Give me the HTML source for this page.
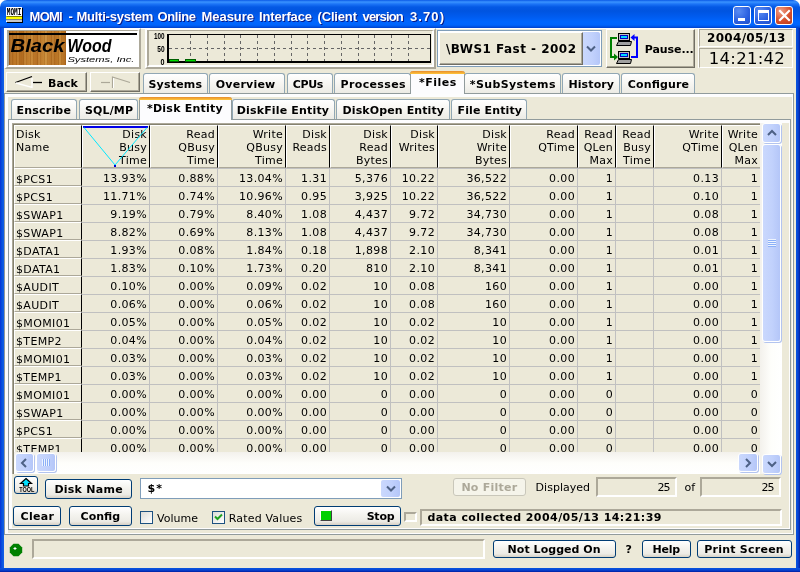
<!DOCTYPE html>
<html><head><meta charset="utf-8"><title>MOMI - Multi-system Online Measure Interface (Client version 3.70)</title>
<style>
*{box-sizing:border-box;margin:0;padding:0}
html,body{width:800px;height:572px;overflow:hidden;background:#ECE9D8}
body{position:relative;font-family:"DejaVu Sans","Liberation Sans",sans-serif;font-size:11px;color:#000}
.a{position:absolute}
/* window frame */
#tb{left:0;top:0;width:800px;height:28px;border-radius:7px 7px 0 0;
 background:linear-gradient(#0a59e6 0,#3a93ff 2px,#1c74f7 4px,#0459e5 7px,#0054e0 11px,#005cf0 17px,#0066ff 22px,#0064fc 25px,#0050e0 27px,#003dc8 28px)}
#bl{left:0;top:28px;width:4px;height:544px;background:linear-gradient(90deg,#0831d9,#0855dd 50%,#1660e8)}
#br{left:796px;top:28px;width:4px;height:544px;background:linear-gradient(90deg,#0855dd,#0845d5 50%,#001ea0)}
#bb{left:0;top:568px;width:800px;height:4px;background:linear-gradient(#0855dd,#0845d5 50%,#001ea0)}
.wb{top:6px;width:18px;height:19px;border:1px solid #fff;border-radius:3px;background:radial-gradient(circle at 30% 25%,#5a8cf2,#2a5fe0 60%,#2050c8)}
/* 3d */
.raised{border:1px solid;border-color:#fff #aca899 #aca899 #fff}
.sunken{border:1px solid;border-color:#aca899 #fff #fff #aca899}
.btn3d{border:1px solid;border-color:#fff #716f64 #716f64 #fff;box-shadow:inset -1px -1px 0 #aca899;background:#ECE9D8}
.xpb{border:1px solid #003c74;border-radius:3px;background:linear-gradient(#fff,#f4f3ee 45%,#ecebe5 80%,#d6d0c5)}
.tab{border:1px solid #91a7b4;border-bottom:none;border-radius:3px 3px 0 0;background:linear-gradient(#fff,#f7f6f2 50%,#ecebe5)}
.tabsel{border:1px solid #919b9c;border-bottom:none;border-top:none;border-radius:3px 3px 0 0;background:#fcfcfe}
.tabsel:before{content:"";position:absolute;left:-1px;right:-1px;top:0;height:3px;background:linear-gradient(#e68b2c,#ffc73c);border-radius:3px 3px 0 0}
.pane{border:1px solid #919b9c;background:#ECE9D8;box-shadow:inset 3px 3px 0 #fdfdfe,inset -1px -1px 0 #fdfdfe}
.fld{border:2px solid;border-color:#aca899 #fff #fff #aca899}
/* grid */
#grid{position:absolute;left:13px;top:124px;width:747px;height:328px;overflow:hidden;background:#ECE9D8;border-top:1px solid #85826f;border-left:1px solid #85826f}
#grid{will-change:transform}
#grid div{position:absolute;white-space:nowrap;line-height:13px}
.fc,.dc{letter-spacing:.35px}
.hc{top:0;height:43px;letter-spacing:.25px;text-align:right;padding:2px 2px 0 0;border-right:1px solid #000;border-bottom:1px solid #aca899;border-top:1px solid #fff;border-left:1px solid #fff}
.hc.l{text-align:left;padding-left:1px}
.fc{height:18px;border:1px solid;border-color:#fff #000 #aca899 #fff;padding:4px 0 0 1px}
.dc{height:18px;border-right:1px solid #c0c0c0;border-bottom:1px solid #c0c0c0;text-align:right;padding:3px 2px 0 0}
.sb{background:linear-gradient(90deg,#cad8fd,#c1d1fc 55%,#b4c6f8);border:1px solid #fff;border-radius:3px;box-shadow:1px 1px 0 #b3c4ef}
</style></head><body>
<!-- window frame -->
<div class="a" style="left:0;top:0;width:800px;height:8px;background:#fff"></div><div class="a" id="tb"></div><div class="a" id="bl"></div><div class="a" id="br"></div><div class="a" id="bb"></div>
<!-- app icon -->
<svg class="a" style="left:6px;top:7px;will-change:transform" width="17" height="16" viewBox="0 0 17 16"><rect x="1" y="1" width="16" height="15" fill="#000"/><rect x="0" y="0" width="16" height="9" fill="#fff"/><path d="M0 10L1 9L2 10L3 9L4 10L5 9L6 10L7 9L8 10L9 9L10 10L11 9L12 10L13 9L14 10L15 9L16 10V12H0Z" fill="#ff0"/><rect x="0" y="12" width="16" height="1" fill="#808080"/><rect x="0" y="13" width="16" height="2" fill="#c8c8c8"/><rect x="0" y="14" width="1" height="1" fill="#fff"/>
<text x="0.800" y="7.800" font-family="DejaVu Sans Mono,Liberation Mono,monospace" font-weight="bold" font-size="8" textLength="14.500" lengthAdjust="spacingAndGlyphs" fill="#000">MOMI</text></svg>
<div class="a wb" style="left:733px"><div class="a" style="left:4px;top:11px;width:7px;height:3px;background:#fff"></div></div>
<div class="a wb" style="left:754px"><div class="a" style="left:3px;top:3px;width:11px;height:11px;border:1px solid #fff;border-top-width:3px"></div></div>
<div class="a wb" style="left:775px;background:radial-gradient(circle at 30% 25%,#f0a088,#d6502c 55%,#b83a1c)"><svg class="a" style="left:2px;top:2px" width="13" height="13" viewBox="0 0 13 13"><path d="M2 2L11 11M11 2L2 11" stroke="#fff" stroke-width="2.200" stroke-linecap="square"/></svg></div>

<!-- row 2 -->
<div class="a" style="left:4px;top:28px;width:792px;height:1px;background:#fff"></div>
<div class="a" style="left:4px;top:28px;width:137px;height:41px;border:solid;border-width:2px 2px 2px 3px;border-color:#fff #aca899 #aca899 #fff"></div>
<div class="a" id="logo" style="left:7px;top:30px;width:132px;height:37px;background:#fff;overflow:hidden;border:solid;border-width:1px 2px 2px 2px;border-color:#aca899 #fff #fff #aca899">
 <div class="a" style="left:0;top:0;width:57px;height:34px;background:repeating-linear-gradient(90deg,rgba(120,60,0,.18) 0 1px,rgba(255,220,140,.12) 1px 3px,rgba(120,60,0,.10) 3px 4px,rgba(255,220,150,.0) 4px 7px),linear-gradient(90deg,#a25c18,#bd7828 10%,#b06a1e 22%,#c48230 36%,#b67024 50%,#c88a38 63%,#b46e22 78%,#c07e2c 90%,#b26c20)"></div>
 <div class="a" style="left:0;top:2px;width:128px;height:2px;background:#000"></div>
</div>
<!-- chart -->
<div class="a" style="left:145px;top:28px;width:291px;height:41px;border:2px solid;border-color:#fff #aca899 #aca899 #fff"></div><div class="a" style="left:147px;top:30px;width:287px;height:37px;border:solid;border-width:1px 2px 2px 2px;border-color:#aca899 #fff #fff #aca899"></div>
<svg class="a" style="left:147px;top:30px" width="286" height="37" viewBox="147 30 286 37">
 <g stroke="#666" stroke-width="1" stroke-dasharray="3 3" fill="none">
  <path d="M169 48.500H430"/>
  <path d="M190.5 35V61M207.5 35V61M224.5 35V61M240.5 35V61M257.5 35V61M274.5 35V61M291.5 35V61M307.5 35V61M324.5 35V61M341.5 35V61M358.5 35V61M374.5 35V61M391.5 35V61M408.5 35V61"/>
 </g>
 <path d="M168 34V63M167 62H431" stroke="#000" stroke-width="2" fill="none"/><path d="M167 34.500H431M430.500 34V63" stroke="#000" stroke-width="1" fill="none"/>
 <rect x="169.500" y="59.500" width="9" height="2" fill="#00e000" stroke="#006000" stroke-width="1"/>
 <rect x="185.500" y="59.500" width="10" height="2" fill="#00e000" stroke="#006000" stroke-width="1"/>
</svg>
<!-- system combo -->
<div class="a" style="left:437px;top:30px;width:165px;height:37px;border:1px solid #7f9db9;background:#fff"></div>
<div class="a btn3d" style="left:439px;top:32px;width:144px;height:33px"></div>
<div class="a sb" style="left:583px;top:31px;width:18px;height:35px;border-left:none;border-radius:0 3px 3px 0;box-shadow:none"></div>
<svg class="a" style="left:585.500px;top:45px" width="10" height="8" viewBox="0 0 10 8"><path d="M1 1.500L5 5.500L9 1.500" stroke="#4d6185" stroke-width="2" fill="none"/></svg>
<!-- pause button -->
<div class="a btn3d" style="left:606px;top:29px;width:89px;height:39px"></div>
<svg class="a" style="left:608px;top:31px" width="34" height="35" viewBox="608 31 34 35">
 <path d="M617 38H611V57H615" stroke="#008000" stroke-width="2" fill="none"/><path d="M614 53.500L618 57L614 60.500Z" fill="#008000"/>
 <path d="M631 57H637V37.500H634" stroke="#0000ff" stroke-width="2" fill="none"/><path d="M634.500 34L630.500 37.500L634.500 41Z" fill="#0000ff"/>
 <g><rect x="618.500" y="33.500" width="11" height="7" fill="#c0c0c0" stroke="#000"/><rect x="620.500" y="35.500" width="7" height="3" fill="#00d8ff" stroke="#0000c0" stroke-width="1"/><path d="M618.500 41.500H631.500L630.500 45.500H616.500Z" fill="#a0a0a0" stroke="#000"/></g>
 <g><rect x="618.500" y="51.500" width="11" height="7" fill="#c0c0c0" stroke="#000"/><rect x="620.500" y="53.500" width="7" height="3" fill="#00d8ff" stroke="#0000c0" stroke-width="1"/><path d="M618.500 59.500H631.500L630.500 63.500H616.500Z" fill="#a0a0a0" stroke="#000"/></g>
</svg>
<!-- date/time -->
<div class="a" style="left:698px;top:29px;width:1px;height:39px;background:#fff"></div><div class="a sunken" style="left:699px;top:29px;width:94px;height:18px"></div>
<div class="a sunken" style="left:699px;top:48px;width:94px;height:20px"></div>

<!-- row 3 : back / fwd -->
<div class="a btn3d" style="left:6px;top:72px;width:81px;height:20px"></div>
<svg class="a" style="left:14px;top:74px" width="30" height="16" viewBox="0 0 30 16"><path d="M1.500 8.500L18 2.500" stroke="#000" stroke-width="1.300" fill="none"/><path d="M2 9L18 13.500V4" stroke="#fff" stroke-width="1.300" fill="none"/><path d="M19 8.500H28" stroke="#000" stroke-width="1.300"/></svg>
<div class="a btn3d" style="left:90px;top:72px;width:50px;height:20px"></div>
<svg class="a" style="left:100px;top:74px" width="32" height="16" viewBox="0 0 32 16"><path d="M1 8.500H10" stroke="#aca899" stroke-width="1.200"/><path d="M12.500 14V3L30 8.500" stroke="#aca899" stroke-width="1.200" fill="none"/><path d="M13.500 14V4" stroke="#fff" stroke-width="1"/></svg>

<!-- outer tab panel -->
<div class="a pane" style="left:4px;top:93px;width:790px;height:442px"></div>
<div class="a tab" style="left:143px;top:73px;width:65px;height:20px"></div>
<div class="a tab" style="left:209px;top:73px;width:76px;height:20px"></div>
<div class="a tab" style="left:287px;top:73px;width:46px;height:20px"></div>
<div class="a tab" style="left:334px;top:73px;width:77px;height:20px"></div>
<div class="a tab" style="left:464px;top:73px;width:97px;height:20px"></div>
<div class="a tab" style="left:562px;top:73px;width:58px;height:20px"></div>
<div class="a tab" style="left:621px;top:73px;width:74px;height:20px"></div>
<div class="a tabsel" style="left:410px;top:71px;width:55px;height:23px"></div>

<!-- inner tab panel -->
<div class="a pane" style="left:8px;top:119px;width:783px;height:411px"></div>
<div class="a tab" style="left:11px;top:99px;width:66px;height:20px"></div>
<div class="a tab" style="left:79px;top:99px;width:59px;height:20px"></div>
<div class="a tab" style="left:232px;top:99px;width:103px;height:20px"></div>
<div class="a tab" style="left:336px;top:99px;width:114px;height:20px"></div>
<div class="a tab" style="left:451px;top:99px;width:76px;height:20px"></div>
<div class="a tabsel" style="left:139px;top:97px;width:93px;height:23px"></div>

<div class="a" style="left:12px;top:123px;width:748px;height:351px;border-top:1px solid #aca899;border-left:1px solid #aca899"></div>
<div id="grid">
<div class="hc l" style="left:0px;width:68px">Disk<br>Name</div>
<div class="hc" style="left:68px;width:68px">Disk<br>Busy<br>Time</div>
<div class="hc" style="left:136px;width:68px">Read<br>QBusy<br>Time</div>
<div class="hc" style="left:204px;width:68px">Write<br>QBusy<br>Time</div>
<div class="hc" style="left:272px;width:44px">Disk<br>Reads</div>
<div class="hc" style="left:316px;width:61px">Disk<br>Read<br>Bytes</div>
<div class="hc" style="left:377px;width:47px">Disk<br>Writes</div>
<div class="hc" style="left:424px;width:72px">Disk<br>Write<br>Bytes</div>
<div class="hc" style="left:496px;width:68px">Read<br>QTime</div>
<div class="hc" style="left:564px;width:38px">Read<br>QLen<br>Max</div>
<div class="hc" style="left:602px;width:38px">Read<br>Busy<br>Time</div>
<div class="hc" style="left:640px;width:68px">Write<br>QTime</div>
<div class="hc" style="left:708px;width:39px">Write<br>QLen<br>Max</div>
<div class="fc" style="left:0px;top:43px;width:68px">$PCS1</div>
<div class="dc" style="left:68px;top:44px;width:68px">13.93%</div>
<div class="dc" style="left:136px;top:44px;width:68px">0.88%</div>
<div class="dc" style="left:204px;top:44px;width:68px">13.04%</div>
<div class="dc" style="left:272px;top:44px;width:44px">1.31</div>
<div class="dc" style="left:316px;top:44px;width:61px">5,376</div>
<div class="dc" style="left:377px;top:44px;width:47px">10.22</div>
<div class="dc" style="left:424px;top:44px;width:72px">36,522</div>
<div class="dc" style="left:496px;top:44px;width:68px">0.00</div>
<div class="dc" style="left:564px;top:44px;width:38px">1</div>
<div class="dc" style="left:602px;top:44px;width:38px"></div>
<div class="dc" style="left:640px;top:44px;width:68px">0.13</div>
<div class="dc" style="left:708px;top:44px;width:39px">1</div>
<div class="fc" style="left:0px;top:61px;width:68px">$PCS1</div>
<div class="dc" style="left:68px;top:62px;width:68px">11.71%</div>
<div class="dc" style="left:136px;top:62px;width:68px">0.74%</div>
<div class="dc" style="left:204px;top:62px;width:68px">10.96%</div>
<div class="dc" style="left:272px;top:62px;width:44px">0.95</div>
<div class="dc" style="left:316px;top:62px;width:61px">3,925</div>
<div class="dc" style="left:377px;top:62px;width:47px">10.22</div>
<div class="dc" style="left:424px;top:62px;width:72px">36,522</div>
<div class="dc" style="left:496px;top:62px;width:68px">0.00</div>
<div class="dc" style="left:564px;top:62px;width:38px">1</div>
<div class="dc" style="left:602px;top:62px;width:38px"></div>
<div class="dc" style="left:640px;top:62px;width:68px">0.10</div>
<div class="dc" style="left:708px;top:62px;width:39px">1</div>
<div class="fc" style="left:0px;top:79px;width:68px">$SWAP1</div>
<div class="dc" style="left:68px;top:80px;width:68px">9.19%</div>
<div class="dc" style="left:136px;top:80px;width:68px">0.79%</div>
<div class="dc" style="left:204px;top:80px;width:68px">8.40%</div>
<div class="dc" style="left:272px;top:80px;width:44px">1.08</div>
<div class="dc" style="left:316px;top:80px;width:61px">4,437</div>
<div class="dc" style="left:377px;top:80px;width:47px">9.72</div>
<div class="dc" style="left:424px;top:80px;width:72px">34,730</div>
<div class="dc" style="left:496px;top:80px;width:68px">0.00</div>
<div class="dc" style="left:564px;top:80px;width:38px">1</div>
<div class="dc" style="left:602px;top:80px;width:38px"></div>
<div class="dc" style="left:640px;top:80px;width:68px">0.08</div>
<div class="dc" style="left:708px;top:80px;width:39px">1</div>
<div class="fc" style="left:0px;top:97px;width:68px">$SWAP1</div>
<div class="dc" style="left:68px;top:98px;width:68px">8.82%</div>
<div class="dc" style="left:136px;top:98px;width:68px">0.69%</div>
<div class="dc" style="left:204px;top:98px;width:68px">8.13%</div>
<div class="dc" style="left:272px;top:98px;width:44px">1.08</div>
<div class="dc" style="left:316px;top:98px;width:61px">4,437</div>
<div class="dc" style="left:377px;top:98px;width:47px">9.72</div>
<div class="dc" style="left:424px;top:98px;width:72px">34,730</div>
<div class="dc" style="left:496px;top:98px;width:68px">0.00</div>
<div class="dc" style="left:564px;top:98px;width:38px">1</div>
<div class="dc" style="left:602px;top:98px;width:38px"></div>
<div class="dc" style="left:640px;top:98px;width:68px">0.08</div>
<div class="dc" style="left:708px;top:98px;width:39px">1</div>
<div class="fc" style="left:0px;top:115px;width:68px">$DATA1</div>
<div class="dc" style="left:68px;top:116px;width:68px">1.93%</div>
<div class="dc" style="left:136px;top:116px;width:68px">0.08%</div>
<div class="dc" style="left:204px;top:116px;width:68px">1.84%</div>
<div class="dc" style="left:272px;top:116px;width:44px">0.18</div>
<div class="dc" style="left:316px;top:116px;width:61px">1,898</div>
<div class="dc" style="left:377px;top:116px;width:47px">2.10</div>
<div class="dc" style="left:424px;top:116px;width:72px">8,341</div>
<div class="dc" style="left:496px;top:116px;width:68px">0.00</div>
<div class="dc" style="left:564px;top:116px;width:38px">1</div>
<div class="dc" style="left:602px;top:116px;width:38px"></div>
<div class="dc" style="left:640px;top:116px;width:68px">0.01</div>
<div class="dc" style="left:708px;top:116px;width:39px">1</div>
<div class="fc" style="left:0px;top:133px;width:68px">$DATA1</div>
<div class="dc" style="left:68px;top:134px;width:68px">1.83%</div>
<div class="dc" style="left:136px;top:134px;width:68px">0.10%</div>
<div class="dc" style="left:204px;top:134px;width:68px">1.73%</div>
<div class="dc" style="left:272px;top:134px;width:44px">0.20</div>
<div class="dc" style="left:316px;top:134px;width:61px">810</div>
<div class="dc" style="left:377px;top:134px;width:47px">2.10</div>
<div class="dc" style="left:424px;top:134px;width:72px">8,341</div>
<div class="dc" style="left:496px;top:134px;width:68px">0.00</div>
<div class="dc" style="left:564px;top:134px;width:38px">1</div>
<div class="dc" style="left:602px;top:134px;width:38px"></div>
<div class="dc" style="left:640px;top:134px;width:68px">0.01</div>
<div class="dc" style="left:708px;top:134px;width:39px">1</div>
<div class="fc" style="left:0px;top:151px;width:68px">$AUDIT</div>
<div class="dc" style="left:68px;top:152px;width:68px">0.10%</div>
<div class="dc" style="left:136px;top:152px;width:68px">0.00%</div>
<div class="dc" style="left:204px;top:152px;width:68px">0.09%</div>
<div class="dc" style="left:272px;top:152px;width:44px">0.02</div>
<div class="dc" style="left:316px;top:152px;width:61px">10</div>
<div class="dc" style="left:377px;top:152px;width:47px">0.08</div>
<div class="dc" style="left:424px;top:152px;width:72px">160</div>
<div class="dc" style="left:496px;top:152px;width:68px">0.00</div>
<div class="dc" style="left:564px;top:152px;width:38px">1</div>
<div class="dc" style="left:602px;top:152px;width:38px"></div>
<div class="dc" style="left:640px;top:152px;width:68px">0.00</div>
<div class="dc" style="left:708px;top:152px;width:39px">1</div>
<div class="fc" style="left:0px;top:169px;width:68px">$AUDIT</div>
<div class="dc" style="left:68px;top:170px;width:68px">0.06%</div>
<div class="dc" style="left:136px;top:170px;width:68px">0.00%</div>
<div class="dc" style="left:204px;top:170px;width:68px">0.06%</div>
<div class="dc" style="left:272px;top:170px;width:44px">0.02</div>
<div class="dc" style="left:316px;top:170px;width:61px">10</div>
<div class="dc" style="left:377px;top:170px;width:47px">0.08</div>
<div class="dc" style="left:424px;top:170px;width:72px">160</div>
<div class="dc" style="left:496px;top:170px;width:68px">0.00</div>
<div class="dc" style="left:564px;top:170px;width:38px">1</div>
<div class="dc" style="left:602px;top:170px;width:38px"></div>
<div class="dc" style="left:640px;top:170px;width:68px">0.00</div>
<div class="dc" style="left:708px;top:170px;width:39px">1</div>
<div class="fc" style="left:0px;top:187px;width:68px">$MOMI01</div>
<div class="dc" style="left:68px;top:188px;width:68px">0.05%</div>
<div class="dc" style="left:136px;top:188px;width:68px">0.00%</div>
<div class="dc" style="left:204px;top:188px;width:68px">0.05%</div>
<div class="dc" style="left:272px;top:188px;width:44px">0.02</div>
<div class="dc" style="left:316px;top:188px;width:61px">10</div>
<div class="dc" style="left:377px;top:188px;width:47px">0.02</div>
<div class="dc" style="left:424px;top:188px;width:72px">10</div>
<div class="dc" style="left:496px;top:188px;width:68px">0.00</div>
<div class="dc" style="left:564px;top:188px;width:38px">1</div>
<div class="dc" style="left:602px;top:188px;width:38px"></div>
<div class="dc" style="left:640px;top:188px;width:68px">0.00</div>
<div class="dc" style="left:708px;top:188px;width:39px">1</div>
<div class="fc" style="left:0px;top:205px;width:68px">$TEMP2</div>
<div class="dc" style="left:68px;top:206px;width:68px">0.04%</div>
<div class="dc" style="left:136px;top:206px;width:68px">0.00%</div>
<div class="dc" style="left:204px;top:206px;width:68px">0.04%</div>
<div class="dc" style="left:272px;top:206px;width:44px">0.02</div>
<div class="dc" style="left:316px;top:206px;width:61px">10</div>
<div class="dc" style="left:377px;top:206px;width:47px">0.02</div>
<div class="dc" style="left:424px;top:206px;width:72px">10</div>
<div class="dc" style="left:496px;top:206px;width:68px">0.00</div>
<div class="dc" style="left:564px;top:206px;width:38px">1</div>
<div class="dc" style="left:602px;top:206px;width:38px"></div>
<div class="dc" style="left:640px;top:206px;width:68px">0.00</div>
<div class="dc" style="left:708px;top:206px;width:39px">1</div>
<div class="fc" style="left:0px;top:223px;width:68px">$MOMI01</div>
<div class="dc" style="left:68px;top:224px;width:68px">0.03%</div>
<div class="dc" style="left:136px;top:224px;width:68px">0.00%</div>
<div class="dc" style="left:204px;top:224px;width:68px">0.03%</div>
<div class="dc" style="left:272px;top:224px;width:44px">0.02</div>
<div class="dc" style="left:316px;top:224px;width:61px">10</div>
<div class="dc" style="left:377px;top:224px;width:47px">0.02</div>
<div class="dc" style="left:424px;top:224px;width:72px">10</div>
<div class="dc" style="left:496px;top:224px;width:68px">0.00</div>
<div class="dc" style="left:564px;top:224px;width:38px">1</div>
<div class="dc" style="left:602px;top:224px;width:38px"></div>
<div class="dc" style="left:640px;top:224px;width:68px">0.00</div>
<div class="dc" style="left:708px;top:224px;width:39px">1</div>
<div class="fc" style="left:0px;top:241px;width:68px">$TEMP1</div>
<div class="dc" style="left:68px;top:242px;width:68px">0.03%</div>
<div class="dc" style="left:136px;top:242px;width:68px">0.00%</div>
<div class="dc" style="left:204px;top:242px;width:68px">0.03%</div>
<div class="dc" style="left:272px;top:242px;width:44px">0.02</div>
<div class="dc" style="left:316px;top:242px;width:61px">10</div>
<div class="dc" style="left:377px;top:242px;width:47px">0.02</div>
<div class="dc" style="left:424px;top:242px;width:72px">10</div>
<div class="dc" style="left:496px;top:242px;width:68px">0.00</div>
<div class="dc" style="left:564px;top:242px;width:38px">1</div>
<div class="dc" style="left:602px;top:242px;width:38px"></div>
<div class="dc" style="left:640px;top:242px;width:68px">0.00</div>
<div class="dc" style="left:708px;top:242px;width:39px">1</div>
<div class="fc" style="left:0px;top:259px;width:68px">$MOMI01</div>
<div class="dc" style="left:68px;top:260px;width:68px">0.00%</div>
<div class="dc" style="left:136px;top:260px;width:68px">0.00%</div>
<div class="dc" style="left:204px;top:260px;width:68px">0.00%</div>
<div class="dc" style="left:272px;top:260px;width:44px">0.00</div>
<div class="dc" style="left:316px;top:260px;width:61px">0</div>
<div class="dc" style="left:377px;top:260px;width:47px">0.00</div>
<div class="dc" style="left:424px;top:260px;width:72px">0</div>
<div class="dc" style="left:496px;top:260px;width:68px">0.00</div>
<div class="dc" style="left:564px;top:260px;width:38px">0</div>
<div class="dc" style="left:602px;top:260px;width:38px"></div>
<div class="dc" style="left:640px;top:260px;width:68px">0.00</div>
<div class="dc" style="left:708px;top:260px;width:39px">0</div>
<div class="fc" style="left:0px;top:277px;width:68px">$SWAP1</div>
<div class="dc" style="left:68px;top:278px;width:68px">0.00%</div>
<div class="dc" style="left:136px;top:278px;width:68px">0.00%</div>
<div class="dc" style="left:204px;top:278px;width:68px">0.00%</div>
<div class="dc" style="left:272px;top:278px;width:44px">0.00</div>
<div class="dc" style="left:316px;top:278px;width:61px">0</div>
<div class="dc" style="left:377px;top:278px;width:47px">0.00</div>
<div class="dc" style="left:424px;top:278px;width:72px">0</div>
<div class="dc" style="left:496px;top:278px;width:68px">0.00</div>
<div class="dc" style="left:564px;top:278px;width:38px">0</div>
<div class="dc" style="left:602px;top:278px;width:38px"></div>
<div class="dc" style="left:640px;top:278px;width:68px">0.00</div>
<div class="dc" style="left:708px;top:278px;width:39px">0</div>
<div class="fc" style="left:0px;top:295px;width:68px">$PCS1</div>
<div class="dc" style="left:68px;top:296px;width:68px">0.00%</div>
<div class="dc" style="left:136px;top:296px;width:68px">0.00%</div>
<div class="dc" style="left:204px;top:296px;width:68px">0.00%</div>
<div class="dc" style="left:272px;top:296px;width:44px">0.00</div>
<div class="dc" style="left:316px;top:296px;width:61px">0</div>
<div class="dc" style="left:377px;top:296px;width:47px">0.00</div>
<div class="dc" style="left:424px;top:296px;width:72px">0</div>
<div class="dc" style="left:496px;top:296px;width:68px">0.00</div>
<div class="dc" style="left:564px;top:296px;width:38px">0</div>
<div class="dc" style="left:602px;top:296px;width:38px"></div>
<div class="dc" style="left:640px;top:296px;width:68px">0.00</div>
<div class="dc" style="left:708px;top:296px;width:39px">0</div>
<div class="fc" style="left:0px;top:313px;width:68px">$TEMP1</div>
<div class="dc" style="left:68px;top:314px;width:68px">0.00%</div>
<div class="dc" style="left:136px;top:314px;width:68px">0.00%</div>
<div class="dc" style="left:204px;top:314px;width:68px">0.00%</div>
<div class="dc" style="left:272px;top:314px;width:44px">0.00</div>
<div class="dc" style="left:316px;top:314px;width:61px">0</div>
<div class="dc" style="left:377px;top:314px;width:47px">0.00</div>
<div class="dc" style="left:424px;top:314px;width:72px">0</div>
<div class="dc" style="left:496px;top:314px;width:68px">0.00</div>
<div class="dc" style="left:564px;top:314px;width:38px">0</div>
<div class="dc" style="left:602px;top:314px;width:38px"></div>
<div class="dc" style="left:640px;top:314px;width:68px">0.00</div>
<div class="dc" style="left:708px;top:314px;width:39px">0</div>
<div style="left:68px;top:43px;width:700px;height:1px;background:#c0c0c0"></div>
</div>
<!-- sort triangle -->
<svg class="a" style="left:82px;top:125px" width="68" height="44" viewBox="0 0 68 44"><path d="M1 2H66" stroke="#0000e8" stroke-width="2"/><path d="M2 2.500L33 40L65 2.500" stroke="#00e8ff" stroke-width="1" fill="none"/><rect x="32" y="40" width="2" height="2" fill="#0000d0"/></svg>

<!-- scrollbars -->
<div class="a" style="left:760px;top:123px;width:22px;height:351px;background:linear-gradient(90deg,#f3f1ec,#fefefb 50%,#fff)"></div>
<div class="a" style="left:14px;top:452px;width:746px;height:22px;background:linear-gradient(#f3f1ec,#fefefb 50%,#fff)"></div><div class="a" style="left:13px;top:452px;width:1px;height:22px;background:#85826f"></div>
<div class="a sb" style="left:762px;top:123px;width:19px;height:20px"></div>
<svg class="a" style="left:767px;top:129px" width="10" height="8" viewBox="0 0 10 8"><path d="M1 6L5 2L9 6" stroke="#4d6185" stroke-width="2" fill="none"/></svg>
<div class="a sb" style="left:762px;top:144px;width:19px;height:198px"></div>
<div class="a" style="left:768px;top:239px;width:8px;height:8px;background:repeating-linear-gradient(#eef4fe 0 1px,#8cb0f8 1px 2px)"></div>
<div class="a sb" style="left:762px;top:454px;width:19px;height:20px"></div>
<svg class="a" style="left:767px;top:460px" width="10" height="8" viewBox="0 0 10 8"><path d="M1 2L5 6L9 2" stroke="#4d6185" stroke-width="2" fill="none"/></svg>
<div class="a sb" style="left:738px;top:453px;width:20px;height:19px"></div>
<svg class="a" style="left:744px;top:458px" width="8" height="10" viewBox="0 0 8 10"><path d="M2 1L6 5L2 9" stroke="#4d6185" stroke-width="2" fill="none"/></svg>
<div class="a sb" style="left:15px;top:453px;width:19px;height:19px"></div>
<svg class="a" style="left:20px;top:458px" width="8" height="10" viewBox="0 0 8 10"><path d="M6 1L2 5L6 9" stroke="#4d6185" stroke-width="2" fill="none"/></svg>
<div class="a sb" style="left:36px;top:453px;width:20px;height:19px"></div>
<div class="a" style="left:42px;top:459px;width:8px;height:7px;background:repeating-linear-gradient(90deg,#eef4fe 0 1px,#8cb0f8 1px 2px)"></div>

<!-- bottom controls row 1 -->
<div class="a xpb" style="left:14px;top:476px;width:24px;height:18px"></div>
<svg class="a" style="left:14px;top:476px" width="24" height="18" viewBox="14 476 24 18"><path d="M26 478.500L31.500 483.500H28.500V486H23.500V483.500H20.500Z" fill="#00e0ff" stroke="#000" stroke-width="1.200"/></svg>
<div class="a xpb" style="left:45px;top:479px;width:87px;height:20px"></div>
<div class="a" style="left:140px;top:478px;width:262px;height:21px;border:1px solid #7f9db9;background:#fff"></div>
<div class="a sb" style="left:380px;top:479px;width:21px;height:19px;box-shadow:none"></div>
<svg class="a" style="left:386px;top:485px" width="10" height="8" viewBox="0 0 10 8"><path d="M1 1.500L5 5.500L9 1.500" stroke="#4d6185" stroke-width="2" fill="none"/></svg>
<div class="a xpb" style="left:453px;top:478px;width:73px;height:18px;border-color:#c9c7ba;background:#f5f4ea"></div>
<div class="a fld" style="left:596px;top:477px;width:81px;height:20px"></div>
<div class="a fld" style="left:700px;top:477px;width:81px;height:20px"></div>
<!-- bottom controls row 2 -->
<div class="a xpb" style="left:13px;top:506px;width:48px;height:20px"></div>
<div class="a xpb" style="left:69px;top:506px;width:63px;height:20px"></div>
<div class="a" style="left:140px;top:511px;width:13px;height:13px;border:1px solid #1c5180;background:linear-gradient(135deg,#dcdcd7,#fff)"></div>
<div class="a" style="left:212px;top:511px;width:13px;height:13px;border:1px solid #1c5180;background:linear-gradient(135deg,#dcdcd7,#fff)"></div>
<svg class="a" style="left:214px;top:513px" width="9" height="9" viewBox="0 0 9 9"><path d="M1 3.500L3.500 6L8 1.500" stroke="#21a121" stroke-width="2" fill="none"/></svg>
<div class="a xpb" style="left:314px;top:506px;width:87px;height:20px"></div>
<div class="a" style="left:320px;top:510px;width:12px;height:11px;background:#00d000;border:1px solid;border-color:#fff #404040 #404040 #fff"></div>
<div class="a fld" style="left:404px;top:512px;width:13px;height:10px"></div>
<div class="a fld" style="left:420px;top:509px;width:362px;height:17px"></div>

<!-- status bar -->
<svg class="a" style="left:9px;top:543px" width="14" height="14" viewBox="0 0 14 14"><path d="M4.500 .8H9.500L13.200 4.500V9.500L9.500 13.200H4.500L.8 9.500V4.500Z" fill="#008000"/><path d="M4.500 5.500H7.500M6 4V7" stroke="#fff" stroke-width="1"/></svg>
<div class="a fld" style="left:32px;top:539px;width:453px;height:20px"></div>
<div class="a xpb" style="left:493px;top:540px;width:123px;height:18px"></div>
<div class="a xpb" style="left:642px;top:540px;width:49px;height:18px"></div>
<div class="a xpb" style="left:697px;top:540px;width:95px;height:18px"></div>
<svg class="a" style="left:0;top:0;pointer-events:none;will-change:transform" width="800" height="572" viewBox="0 0 800 572" font-family="DejaVu Sans,Liberation Sans,sans-serif">
<g font-family="Liberation Sans,sans-serif" font-size="13" font-weight="bold"><g fill="#0a1883"><text x="30.6" y="22" textLength="33">MOMI</text><text x="69.5" y="22" textLength="4">-</text><text x="77.4" y="22" textLength="77">Multi-system</text><text x="158.5" y="22" textLength="38.5">Online</text><text x="202.5" y="22" textLength="52.5">Measure</text><text x="260" y="22" textLength="53">Interface</text><text x="318.5" y="22" textLength="39.5">(Client</text><text x="363.5" y="22" textLength="41.3">version</text><text x="411" y="22" textLength="34">3.70)</text></g><g fill="#fff"><text x="29.6" y="21" textLength="33">MOMI</text><text x="68.5" y="21" textLength="4">-</text><text x="76.4" y="21" textLength="77">Multi-system</text><text x="157.5" y="21" textLength="38.5">Online</text><text x="201.5" y="21" textLength="52.5">Measure</text><text x="259" y="21" textLength="53">Interface</text><text x="317.5" y="21" textLength="39.5">(Client</text><text x="362.5" y="21" textLength="41.3">version</text><text x="410" y="21" textLength="34">3.70)</text></g></g>
<g font-family="Liberation Sans,sans-serif" font-style="italic" lengthAdjust="spacingAndGlyphs"><text x="10.6" y="52.3" font-size="18.5" font-weight="bold" textLength="54" lengthAdjust="spacingAndGlyphs">Black</text><text x="67.4" y="52.3" font-size="18.5" font-weight="bold" textLength="44" lengthAdjust="spacingAndGlyphs">Wood</text><text x="67.4" y="62.4" font-size="8" textLength="67" lengthAdjust="spacingAndGlyphs">Systems, Inc.</text></g>
<text x="148.5" y="88" font-size="11" font-weight="bold" textLength="53.5">Systems</text>
<text x="215.75" y="88" font-size="11" font-weight="bold" textLength="59.5">Overview</text>
<text x="292.75" y="88" font-size="11" font-weight="bold" textLength="30.65">CPUs</text>
<text x="340.5" y="88" font-size="11" font-weight="bold" textLength="65.1">Processes</text>
<text x="469.75" y="88" font-size="11" font-weight="bold" textLength="85.75">*SubSystems</text>
<text x="568.4" y="88" font-size="11" font-weight="bold" textLength="45.6">History</text>
<text x="627.8" y="88" font-size="11" font-weight="bold" textLength="61.2">Configure</text>
<text x="419" y="85.5" font-size="11" font-weight="bold" textLength="37.4">*Files</text>
<text x="16.6" y="114" font-size="11" font-weight="bold" textLength="54.3">Enscribe</text>
<text x="84.9" y="114" font-size="11" font-weight="bold" textLength="48.1">SQL/MP</text>
<text x="236.75" y="114" font-size="11" font-weight="bold" textLength="92.25">DiskFile Entity</text>
<text x="342.6" y="114" font-size="11" font-weight="bold" textLength="101.4">DiskOpen Entity</text>
<text x="457.5" y="114" font-size="11" font-weight="bold" textLength="64.5">File Entity</text>
<text x="147" y="112" font-size="11" font-weight="bold" textLength="75.75">*Disk Entity</text>
<text x="48.1" y="87" font-size="11" font-weight="bold" textLength="29.8">Back</text>
<text x="445.9" y="52.5" font-size="12" font-weight="bold" textLength="130.1">\BWS1 Fast - 2002</text>
<text x="644.8" y="53" font-size="11" font-weight="bold" textLength="49">Pause...</text>
<text x="707" y="42" font-size="12" font-weight="bold" textLength="78.4">2004/05/13</text>
<text x="708.8" y="64" font-size="16.5" textLength="76">14:21:42</text>
<text x="54.4" y="492.7" font-size="11" font-weight="bold" textLength="68.2">Disk Name</text>
<text x="147.4" y="492" font-size="11" font-weight="bold" textLength="14.6">$*</text>
<text x="461.4" y="491" font-size="11" font-weight="bold" fill="#aca899" textLength="55.8">No Filter</text>
<text x="535.6" y="491.4" font-size="11" textLength="54.4">Displayed</text>
<text x="657.5" y="491.4" font-size="11" textLength="13">25</text>
<text x="684.5" y="491.4" font-size="11" textLength="10.5">of</text>
<text x="761.5" y="491.4" font-size="11" textLength="13">25</text>
<text x="20.6" y="519.7" font-size="11" font-weight="bold" textLength="33.25">Clear</text>
<text x="80.6" y="519.7" font-size="11" font-weight="bold" textLength="39.4">Config</text>
<text x="157" y="522" font-size="11" textLength="41.1">Volume</text>
<text x="228.75" y="522" font-size="11" textLength="73.5">Rated Values</text>
<text x="366.65" y="519.7" font-size="11" font-weight="bold" textLength="28">Stop</text>
<text x="427.4" y="521.3" font-size="11" font-weight="bold" textLength="234">data collected 2004/05/13 14:21:39</text>
<text x="507.6" y="552.6" font-size="11" font-weight="bold" textLength="93">Not Logged On</text>
<text x="625.6" y="552.6" font-size="11" font-weight="bold" textLength="6.4">?</text>
<text x="652.5" y="552.6" font-size="11" font-weight="bold" textLength="27.5">Help</text>
<text x="704.2" y="552.6" font-size="11" font-weight="bold" textLength="79.5">Print Screen</text>
<text x="19.2" y="491.8" font-size="7" font-weight="bold" textLength="15.2" lengthAdjust="spacingAndGlyphs" font-family="Liberation Sans,sans-serif">TOOL</text>
<text x="154" y="38.7" font-size="8.5" font-weight="bold" textLength="10.6" lengthAdjust="spacingAndGlyphs" font-family="Liberation Sans,sans-serif">100</text>
<text x="157.3" y="51.7" font-size="8.5" font-weight="bold" textLength="7.3" lengthAdjust="spacingAndGlyphs" font-family="Liberation Sans,sans-serif">50</text>
<text x="160.6" y="65" font-size="8.5" font-weight="bold" textLength="4" lengthAdjust="spacingAndGlyphs" font-family="Liberation Sans,sans-serif">0</text>
</svg>
</body></html>
